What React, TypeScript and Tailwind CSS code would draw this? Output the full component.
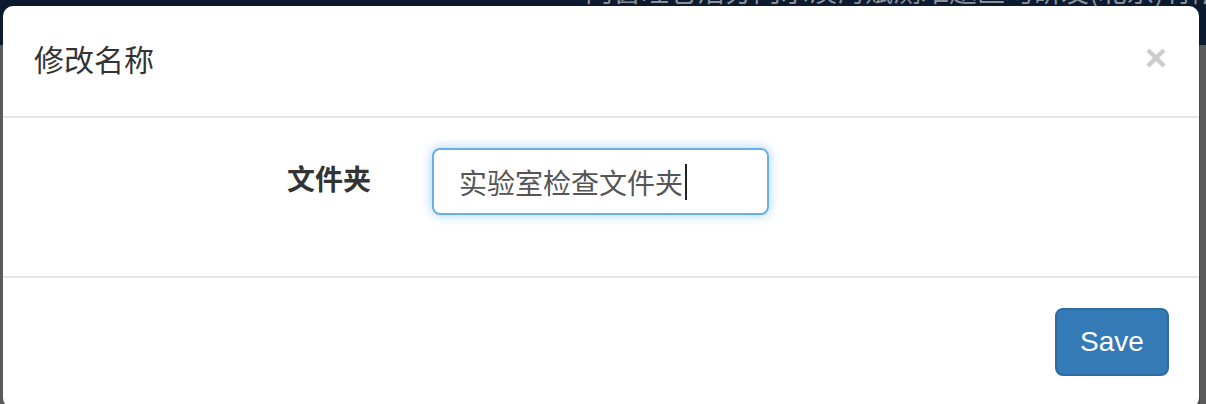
import React from "react";

const cjk = "font-['Noto_Sans_CJK_SC','Noto_Sans',sans-serif]";

function CloseIcon() {
  return (
    <svg width="20" height="20" viewBox="0 0 20 20" aria-hidden="true">
      <path d="M2 2 L18 18 M18 2 L2 18" stroke="#cccccc" strokeWidth="4.5" strokeLinecap="butt" />
    </svg>
  );
}

export default function App() {
  return (
    <div className="relative h-[404px] w-[1206px] overflow-hidden bg-[#5a5a5a]">
      {/* page behind the backdrop */}
      <div className="h-[45px] overflow-hidden bg-[#0b1a2f]">
        <div className={`${cjk} -mt-[24px] pl-[585px] whitespace-nowrap text-[28px] leading-none text-[#8a9099]`}>
          内窗旺仓活分内示淡海赋测难题区均研发(北京)有限公司
        </div>
      </div>
      <div className="border-r-2 border-[#4a4a4a] h-full w-[1200px]" />

      {/* modal */}
      <div className={`${cjk} absolute left-[3px] top-[6px] h-[402px] w-[1196px] rounded-[10px] bg-white`}>
        <div className="flex items-start justify-between border-b-2 border-[#e5e5e5] pl-[31px] pr-[33px] pt-[27px] h-[112px]">
          <h4 className="text-[30px] font-normal leading-[51px] text-[#333]">修改名称</h4>
          <button className="mt-[15px]">
            <CloseIcon />
          </button>
        </div>

        <div className="flex h-[160px] items-start border-b-2 border-[#e5e5e5] pt-[30px] pl-[30px]">
          <label className="w-[338px] pt-[10px] text-right text-[28px] font-bold leading-[40px] text-[#333]">
            文件夹
          </label>
          <div className="ml-[61px] flex h-[67px] w-[337px] items-center rounded-[8px] border-2 border-[#66afe9] pl-[25px] text-[28px] text-[#555] shadow-[0_0_12px_rgba(102,175,233,0.6)]">
            <span>实验室检查文件夹</span>
            <span className="ml-[2px] h-[36px] w-[2px] bg-[#222]" />
          </div>
        </div>

        <div className="flex justify-end pr-[30px] pt-[30px]">
          <button className="h-[68px] w-[114px] rounded-[8px] border-2 border-[#2e6da4] bg-[#337ab7] font-['Liberation_Sans',Arial,sans-serif] text-[28px] text-white">
            Save
          </button>
        </div>
      </div>
    </div>
  );
}
